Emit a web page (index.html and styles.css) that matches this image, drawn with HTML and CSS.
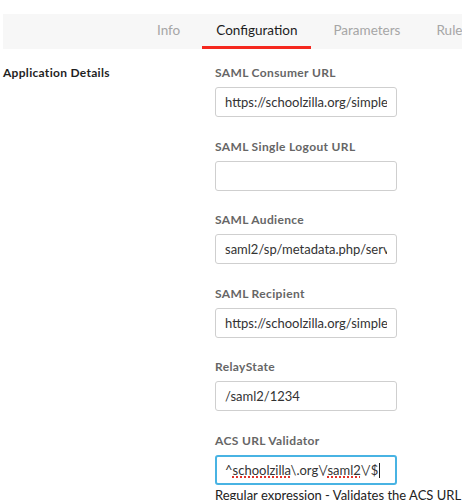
FILE: index.html
```html
<!DOCTYPE html>
<html>
<head>
<meta charset="utf-8">
<link rel="stylesheet" href="styles.css">
</head>
<body>
<nav class="tabs">
  <div class="tab">Info</div>
  <div class="tab active">Configuration</div>
  <div class="tab">Parameters</div>
  <div class="tab">Rules</div>
</nav>
<main class="content">
  <h2 class="section-title">Application Details</h2>
  <div class="fields">
    <div class="field">
      <label class="label">SAML Consumer URL</label>
      <div class="input"><span class="value">https://schoolzilla.org/simplesaml/module.php/saml/sp/saml2-acs.php/servicename</span></div>
    </div>
    <div class="field">
      <label class="label">SAML Single Logout URL</label>
      <div class="input"><span class="value"></span></div>
    </div>
    <div class="field">
      <label class="label">SAML Audience</label>
      <div class="input"><span class="value">saml2/sp/metadata.php/servicename</span></div>
    </div>
    <div class="field">
      <label class="label">SAML Recipient</label>
      <div class="input"><span class="value">https://schoolzilla.org/simplesaml/module.php/saml/sp</span></div>
    </div>
    <div class="field">
      <label class="label">RelayState</label>
      <div class="input"><span class="value">/saml2/1234</span></div>
    </div>
    <div class="field last">
      <label class="label">ACS URL Validator</label>
      <div class="input focused"><span class="value">^<span class="typo">schoolzilla</span>\.org<span class="esc">\</span>/<span class="typo">saml2</span><span class="esc">\</span>/$<span class="caret"></span></span></div>
      <div class="help">Regular expression - Validates the ACS URL</div>
    </div>
  </div>
</main>
</body>
</html>
```
FILE: styles.css
```css
html, body {
  margin: 0;
  padding: 0;
  background: #ffffff;
  overflow: hidden;
}
body {
  font-family: "Lato", "Open Sans", sans-serif;
  color: #222;
  width: 462px;
  height: 500px;
}
.tabs {
  margin: 14px 0 0 3px;
  height: 35px;
  background: #f7f7f7;
  display: flex;
  gap: 8px;
  padding-left: 140px;
  white-space: nowrap;
  overflow: hidden;
}
.tab {
  padding: 0 14px;
  font-size: 13.5px;
  color: #a6a6a6;
  line-height: 33px;
  height: 35px;
  box-sizing: border-box;
  border-bottom: 3px solid transparent;
}
.tab.active {
  color: #1d1d1d;
  border-bottom-color: #f5281f;
}
.content {
  display: grid;
  grid-template-columns: 212px 250px;
  padding-left: 3px;
}
.section-title {
  margin: 17px 0 0 0;
  font-size: 12px;
  line-height: 14px;
  font-weight: 700;
  letter-spacing: 0.3px;
  color: #1f1f1f;
}
.fields {
  padding-top: 17px;
  display: flex;
  flex-direction: column;
}
.field {
  margin-bottom: 22.6px;
}
.field.last {
  margin-bottom: 0;
}
.label {
  display: block;
  font-size: 12px;
  line-height: 14px;
  font-weight: 700;
  letter-spacing: 0.35px;
  color: #666;
  margin-bottom: 7px;
}
.input {
  width: 182px;
  height: 30px;
  box-sizing: border-box;
  border: 1px solid #cfcfcf;
  border-radius: 3px;
  padding: 0 9px 0 9px;
  font-size: 13px;
  line-height: 28px;
  color: #333;
  background: #fff;
}
.value {
  display: block;
  white-space: nowrap;
  overflow: hidden;
  height: 100%;
}
.input.focused {
  border: 2px solid #48b3e3;
  line-height: 26px;
  padding-left: 8px;
}
.esc {
  letter-spacing: -2px;
}
.typo {
  text-decoration: underline dotted #e0332a;
  text-decoration-thickness: 2px;
  text-underline-offset: 2px;
}
.caret {
  display: inline-block;
  width: 1px;
  height: 15px;
  background: #222;
  vertical-align: -3px;
  margin-left: 1px;
}
.help {
  margin-top: 3px;
  font-size: 13px;
  line-height: 14px;
  color: #222;
  white-space: nowrap;
}
```
